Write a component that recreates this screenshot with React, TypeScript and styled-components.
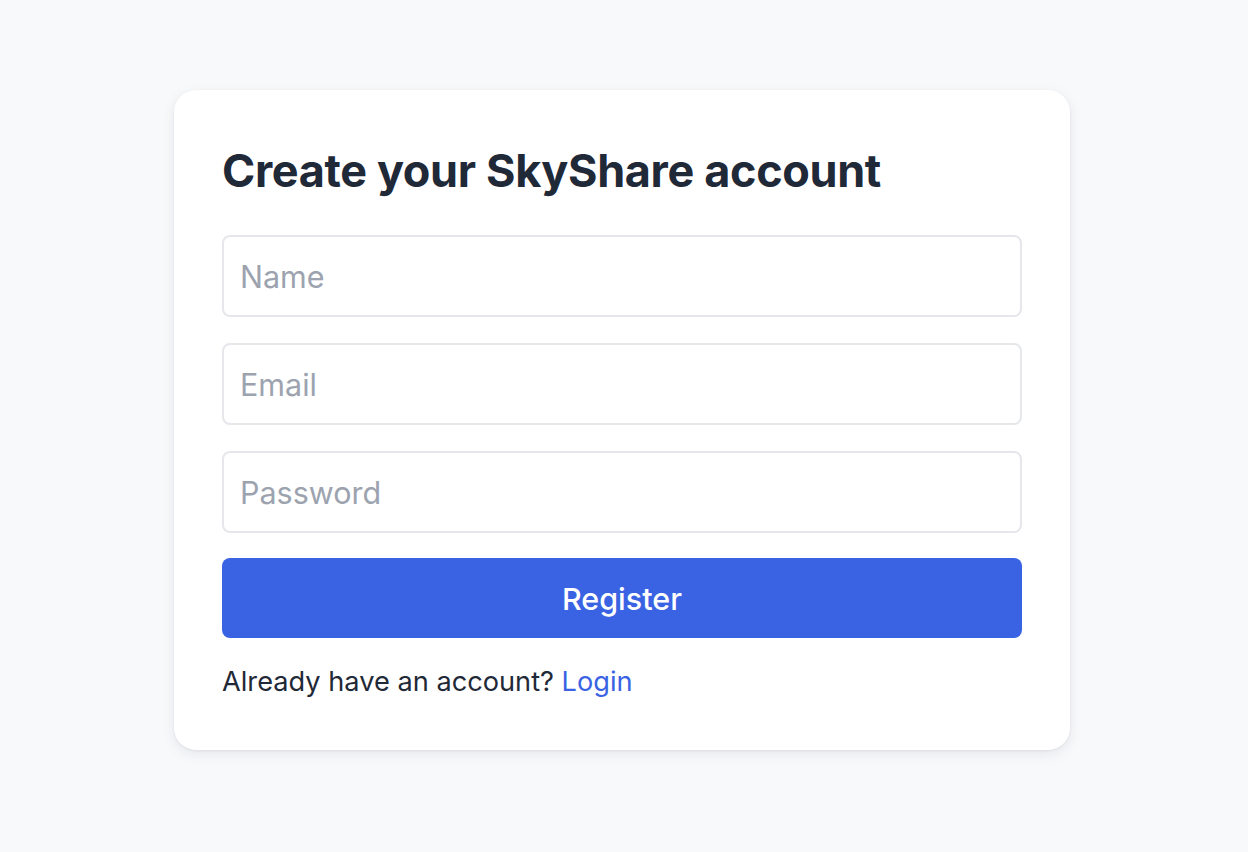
import React from "react";
import styled, { createGlobalStyle } from "styled-components";

const Global = createGlobalStyle`
  html, body { margin: 0; padding: 0; }
  body {
    background: #f8f9fb;
    font-family: Inter, "Noto Sans", sans-serif;
    color: #1f2937;
  }
  * { box-sizing: border-box; }
`;

const Page = styled.div`
  min-height: 852px;
  display: flex;
  justify-content: center;
  align-items: flex-start;
  padding: 90px 4px 0 0;
`;

const Card = styled.form`
  width: 896px;
  background: #ffffff;
  border-radius: 22px;
  box-shadow: 0 4px 14px rgba(15, 23, 42, 0.08), 0 1px 3px rgba(15, 23, 42, 0.06);
  padding: 52px 48px 48px;
  display: flex;
  flex-direction: column;
`;

const Title = styled.h1`
  margin: 0 0 35px;
  font-size: 45px;
  line-height: 58px;
  font-weight: 700;
  color: #1f2937;
  letter-spacing: -0.35px;
`;

const Fields = styled.div`
  display: flex;
  flex-direction: column;
  gap: 26px;
`;

const Input = styled.input`
  width: 100%;
  height: 82px;
  border: 2px solid #e5e7eb;
  border-radius: 8px;
  padding: 0 16px;
  font-family: Inter, "Noto Sans", sans-serif;
  font-size: 30.5px;
  color: #1f2937;
  background: #fff;
  outline: none;
  &::placeholder { color: #9ca3af; }
`;

const Button = styled.button`
  width: 100%;
  height: 80px;
  margin-top: -1px;
  border: none;
  border-radius: 8px;
  background: #3a63e3;
  color: #ffffff;
  font-family: Inter, "Noto Sans", sans-serif;
  font-size: 30.5px;
  font-weight: 500;
  cursor: pointer;
`;

const Footer = styled.p`
  margin: 24px 0 0;
  font-size: 27.2px;
  line-height: 40px;
  color: #1f2937;
`;

const Link = styled.a`
  color: #3a63e3;
  text-decoration: none;
`;

export default function App() {
  return (
    <>
      <Global />
      <Page>
        <Card onSubmit={(e) => e.preventDefault()}>
          <Title>Create your SkyShare account</Title>
          <Fields>
            <Input type="text" placeholder="Name" />
            <Input type="email" placeholder="Email" />
            <Input type="password" placeholder="Password" />
            <Button type="submit">Register</Button>
          </Fields>
          <Footer>
            Already have an account? <Link href="#">Login</Link>
          </Footer>
        </Card>
      </Page>
    </>
  );
}
